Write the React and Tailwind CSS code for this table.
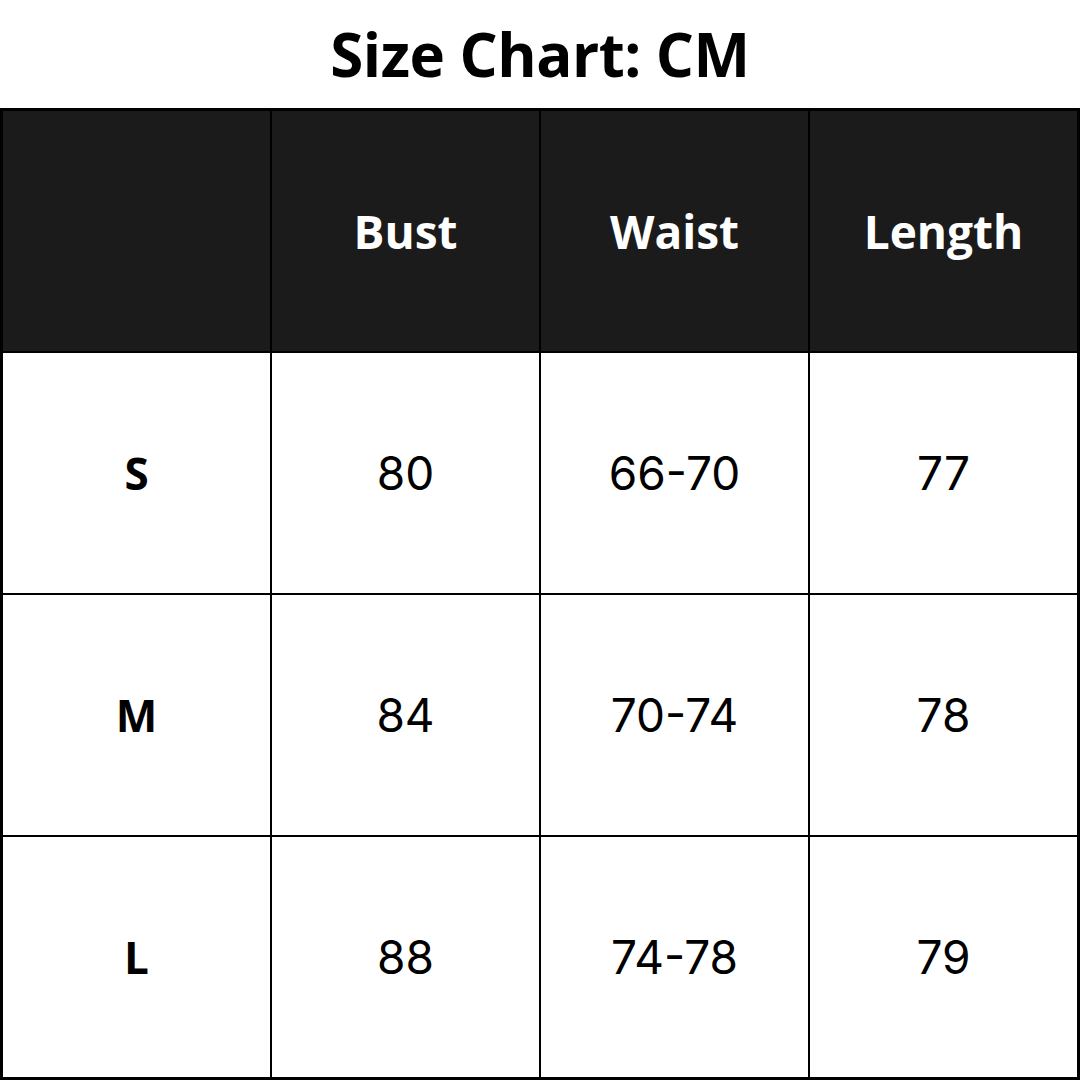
import { Fragment } from 'react'

const rows = [
  { size: 'S', bust: '80', waist: '66-70', length: '77' },
  { size: 'M', bust: '84', waist: '70-74', length: '78' },
  { size: 'L', bust: '88', waist: '74-78', length: '79' },
]

const App = () => {
  return (
    <div className="w-[1080px] h-[1080px] bg-white flex flex-col">
      {/* Title */}
      <div className="h-[108px] flex items-center justify-center">
        <h1 className="text-[60px] font-bold text-black tracking-[-0.5px] leading-none font-['Open_Sans',sans-serif]">
          Size Chart: CM
        </h1>
      </div>

      {/* Table */}
      <div className="flex-1 border-[3px] border-black grid grid-cols-4 grid-rows-4 gap-[2px] bg-black">
        <div className="bg-[#1b1b1b]"></div>
        {['Bust', 'Waist', 'Length'].map((h) => (
          <div
            key={h}
            className="bg-[#1b1b1b] flex items-center justify-center text-white text-[46px] font-bold font-['Open_Sans',sans-serif]"
          >
            {h}
          </div>
        ))}

        {rows.map((r) => (
          <Fragment key={r.size}>
            <div className="bg-white flex items-center justify-center text-black text-[44px] font-bold font-['Open_Sans',sans-serif]">
              {r.size}
            </div>
            <div className="bg-white flex items-center justify-center text-black text-[46px] font-['Inter',sans-serif]">
              {r.bust}
            </div>
            <div className="bg-white flex items-center justify-center text-black text-[46px] font-['Inter',sans-serif]">
              {r.waist}
            </div>
            <div className="bg-white flex items-center justify-center text-black text-[46px] font-['Inter',sans-serif]">
              {r.length}
            </div>
          </Fragment>
        ))}
      </div>
    </div>
  )
}

export default App
